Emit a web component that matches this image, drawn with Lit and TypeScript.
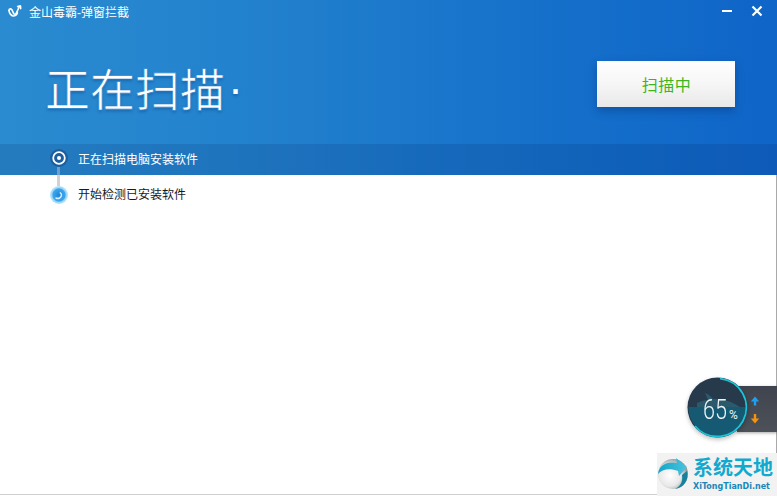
import { LitElement, html, css } from "lit";
import { customElement } from "lit/decorators.js";

@customElement("app-root")
export class AppRoot extends LitElement {
  static styles = css`
    :host {
      display: block;
      position: relative;
      width: 777px;
      height: 496px;
      overflow: hidden;
      background: #fff;
      font-family: "Liberation Sans", "Noto Sans CJK SC", sans-serif;
    }
    .top {
      height: 175px;
      background: linear-gradient(90deg, #2a8bd0 0%, #2382cd 30%, #1570ca 70%, #0f65c8 100%);
      display: flex;
      flex-direction: column;
    }
    .titlebar {
      height: 22px;
      display: flex;
      align-items: center;
      color: #fff;
      font-size: 12px;
      padding-left: 8px;
    }
    .logo { width: 15px; height: 15px; margin-right: 6px; }
    .title { flex: 1; }
    .winbtn { width: 14px; height: 14px; display: block; }
    .min { margin-right: 16px; }
    .close { margin-right: 13px; }
    .hero {
      display: flex;
      align-items: flex-start;
      padding-left: 45px;
      padding-right: 42px;
      flex: 1;
    }
    h1 {
      flex: 1;
      margin: 38px 0 0;
      font-size: 45px;
      line-height: 58px;
      font-weight: 400;
      color: #fff;
      font-family: "Liberation Sans", "Noto Sans CJK SC", sans-serif;
      -webkit-text-stroke: 0.7px #2585ce;
      text-shadow: 0 2px 3px rgba(0, 50, 110, 0.35);
    }
    .tick {
      margin-left: 3px;
      vertical-align: 3px;
      -webkit-text-stroke: 0;
    }
    .scan {
      margin-top: 39px;
      width: 138px;
      height: 46px;
      display: flex;
      align-items: center;
      justify-content: center;
      background: linear-gradient(180deg, #ffffff 0%, #f6f6f6 50%, #e8e8e8 100%);
      color: #3cb61c;
      font-size: 16px;
      letter-spacing: 0.5px;
      padding-left: 1px;
      box-sizing: border-box;
      box-shadow: 0 4px 8px rgba(0, 40, 100, 0.35);
    }
    .step {
      display: flex;
      align-items: center;
      padding-left: 50px;
      font-size: 12px;
      position: relative;
    }
    .step.active {
      height: 31px;
      padding-bottom: 2px;
      box-sizing: border-box;
      flex: none;
      background: rgba(0, 20, 70, 0.12);
      color: #fff;
    }
    .step.next {
      height: 36px;
      color: #1a1a1a;
    }
    .dot { width: 18px; height: 18px; margin-right: 10px; display: block; flex: none; }
    .active .dot { margin-bottom: 1px; }
    .next .dot { margin-top: 3px; }
    .link {
      width: 3px;
      height: 19px;
      background: linear-gradient(180deg, #6f9fc8 0, #6f9fc8 8px, #d2d2d2 8px, #d2d2d2 100%);
      position: absolute;
      left: 57px;
      top: 167px;
    }
    .rail {
      position: absolute;
      left: 776px;
      top: 175px;
      width: 1px;
      height: 278px;
      background: #a9a9a9;
    }
    .widget {
      position: absolute;
      left: 687px;
      top: 377px;
      width: 90px;
      height: 64px;
    }
    .panel {
      position: absolute;
      left: 50px;
      top: 9px;
      width: 40px;
      height: 46px;
      background: linear-gradient(180deg, #3f444e 0%, #4d5159 100%);
      box-shadow: 0 1px 3px rgba(0,0,0,.35);
    }
    .gauge {
      position: absolute;
      left: 0;
      top: 0;
      width: 62px;
      height: 62px;
      filter: drop-shadow(0 2px 2px rgba(0,0,0,.25));
    }
    .arrows { position: absolute; left: 61px; top: 16px; width: 14px; height: 36px; }
    .pct {
      position: absolute;
      left: 16px;
      top: 18px;
      display: flex;
      align-items: baseline;
      color: #eef4f7;
      font-family: "Roboto", sans-serif;
      font-size: 27px;
      line-height: 30px;
      font-weight: 300;
      white-space: nowrap;
    }
    .digits { display: inline-block; transform: scaleX(0.8); transform-origin: left center; width: 26px; }
    .pct small { font-size: 12px; font-weight: 400; }
    .mark {
      position: absolute;
      left: 657px;
      top: 453px;
      width: 120px;
      height: 43px;
      background: #f2f2f2;
      display: flex;
      align-items: flex-start;
    }
    .swirl { width: 36px; height: 43px; flex: none; }
    .mark-text { display: flex; flex-direction: column; }
    .mark-cn {
      font-family: "Noto Sans CJK SC", sans-serif;
      font-weight: 700;
      font-size: 20px;
      line-height: 22px;
      margin-top: 3px;
      color: #12a9cf;
      white-space: nowrap;
    }
    .mark-en {
      font-family: "DejaVu Sans", sans-serif;
      font-weight: 700;
      font-size: 8px;
      line-height: 10px;
      margin-top: 4px;
      color: #1b87b8;
      white-space: nowrap;
    }
    .edge {
      position: absolute;
      left: 0;
      bottom: 1px;
      width: 657px;
      height: 1px;
      background: #cfcfcf;
    }
  `;

  render() {
    return html`
      <div class="top">
        <div class="titlebar">
          <svg class="logo" viewBox="0 0 15 15" fill="none" stroke="#fff" stroke-width="1.600" stroke-linecap="round" stroke-linejoin="round">
            <path d="M1 6.500c0-2 2.200-2.200 3-.6l1.600 3.400c.6 1.200 2 1.200 2.600 0L11.200 3" />
            <path d="M1 6.500c.2 3 2.400 5.500 4.800 5.500 2.200 0 3.800-1.800 3.600-4" />
            <path d="M9.600 2.600l2.800-.9.300 2.900" />
          </svg>
          <span class="title">金山毒霸-弹窗拦截</span>
          <svg class="winbtn min" viewBox="0 0 14 14"><rect x="2" y="6" width="10" height="2" fill="#fff" /></svg>
          <svg class="winbtn close" viewBox="0 0 14 14" stroke="#fff" stroke-width="2.200"><path d="M2.500 2.500l9 9M11.500 2.500l-9 9" /></svg>
        </div>
        <div class="hero">
          <h1>正在扫描<span class="tick">·</span></h1>
          <div class="scan">扫描中</div>
        </div>
        <div class="step active">
          <svg class="dot" viewBox="0 0 18 18">
            <circle cx="9" cy="9" r="9" fill="#1c5fa0" />
            <circle cx="9" cy="9" r="5.800" fill="none" stroke="#fff" stroke-width="1.800" />
            <circle cx="9" cy="9" r="2" fill="#fff" />
          </svg>
          正在扫描电脑安装软件
        </div>
      </div>
      <div class="step next">
        <svg class="dot" viewBox="0 0 18 18">
          <defs>
            <radialGradient id="b" cx="50%" cy="50%" r="50%">
              <stop offset="0" stop-color="#1f86da" />
              <stop offset=".68" stop-color="#3ea6ee" />
              <stop offset=".8" stop-color="#9ad8f8" />
              <stop offset="1" stop-color="#b8e4fa" />
            </radialGradient>
          </defs>
          <circle cx="9" cy="9" r="9" fill="url(#b)" />
          <path d="M6 12c2.500 1.200 5.500-.3 5.500-3 0-1-.5-1.800-1.200-2.200" fill="none" stroke="#d8f0fc" stroke-width="1.500" stroke-linecap="round" />
        </svg>
        开始检测已安装软件
      </div>
      <div class="link"></div>
      <div class="rail"></div>
      <div class="edge"></div>

      <div class="widget">
        <div class="panel"></div>
        <svg class="arrows" viewBox="0 0 14 36">
          <path d="M7 3.500l4.200 5H8.200V12.500H5.800V8.500H2.800z" fill="#1e9ff0" />
          <path d="M7 30.500l4.200-5H8.200V21H5.800v4.500H2.800z" fill="#f5920f" />
        </svg>
        <svg class="gauge" viewBox="0 0 62 62">
          <defs>
            <clipPath id="c"><circle cx="30.500" cy="30.500" r="29" /></clipPath>
          </defs>
          <circle cx="30.500" cy="30.500" r="30" fill="#263a4c" />
          <g clip-path="url(#c)">
            <rect x="0" y="30" width="62" height="32" fill="#155a72" />
            <path d="M10 26c4-2 8-3 11-3l-3-7c4 1 6 4 8 6 10 0 18 2 27 8H10z" fill="#2a5a6c" />
          </g>
          <path d="M33 1.600A29 29 0 1 1 8 49" fill="none" stroke="#1bc4d8" stroke-width="1.800" />
        </svg>
        <div class="pct"><span class="digits">65</span><small>%</small></div>
      </div>

      <div class="mark">
        <svg class="swirl" viewBox="0 0 36 43">
          <defs>
            <radialGradient id="s" cx="40%" cy="55%" r="60%">
              <stop offset="0" stop-color="#ffffff" />
              <stop offset=".6" stop-color="#e8e8e8" />
              <stop offset="1" stop-color="#8b9497" />
            </radialGradient>
            <linearGradient id="t" x1="0" y1="0" x2="1" y2="0">
              <stop offset="0" stop-color="#12a5c8" />
              <stop offset="1" stop-color="#4ac3de" />
            </linearGradient>
          </defs>
          <circle cx="16" cy="21" r="15" fill="url(#s)" />
          <path d="M1 21C2 12 10 8 20 10l-1-5 11 9-8 9-1-5C13 15 5 16 1 21z" fill="url(#t)" />
          <path d="M30 18c2 9-3 17-12 18 6-3 8-8 7-14z" fill="#17809c" />
        </svg>
        <div class="mark-text">
          <div class="mark-cn">系统天地</div>
          <div class="mark-en">XiTongTianDi.net</div>
        </div>
      </div>
    `;
  }
}
